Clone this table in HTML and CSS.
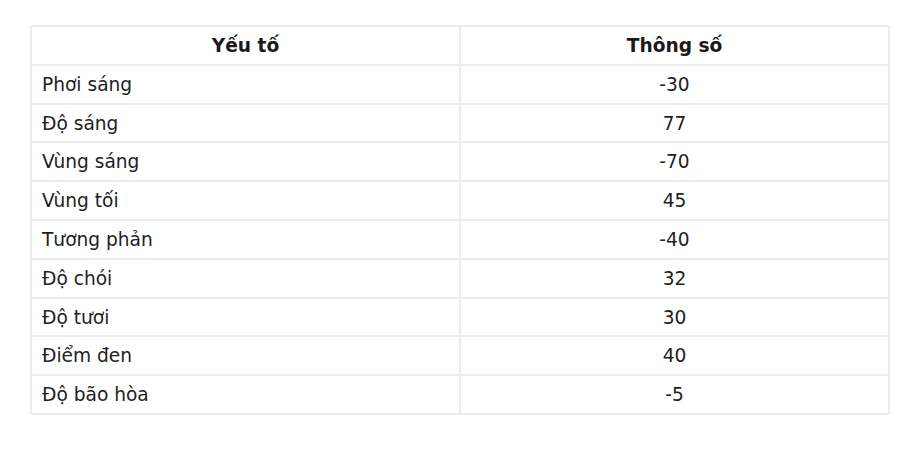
FILE: index.html
```html
<!DOCTYPE html>
<html lang="vi">
<head>
<meta charset="utf-8">
<link rel="stylesheet" href="styles.css">
</head>
<body>
<table class="params">
  <thead>
    <tr><th>Yếu tố</th><th>Thông số</th></tr>
  </thead>
  <tbody>
    <tr><td>Phơi sáng</td><td class="val">-30</td></tr>
    <tr><td>Độ sáng</td><td class="val">77</td></tr>
    <tr><td>Vùng sáng</td><td class="val">-70</td></tr>
    <tr><td>Vùng tối</td><td class="val">45</td></tr>
    <tr><td>Tương phản</td><td class="val">-40</td></tr>
    <tr><td>Độ chói</td><td class="val">32</td></tr>
    <tr><td>Độ tươi</td><td class="val">30</td></tr>
    <tr><td>Điểm đen</td><td class="val">40</td></tr>
    <tr><td>Độ bão hòa</td><td class="val">-5</td></tr>
  </tbody>
</table>
</body>
</html>
```
FILE: styles.css
```css
html, body {
  margin: 0;
  background: #ffffff;
}
body {
  padding: 25px 30px;
  font-family: "DejaVu Sans", Verdana, sans-serif;
  font-size: 18.6px;
  color: #1e1e1e;
}
.params {
  width: 860px;
  border-collapse: collapse;
  table-layout: fixed;
}
.params th,
.params td {
  width: 50%;
  border: 2px solid #ececec;
  padding: 8px 10px 6px;
  line-height: 22.8px;
  text-align: left;
  font-weight: normal;
}
.params th {
  text-align: center;
  font-weight: bold;
  color: #1a1a1a;
}
.params td.val {
  text-align: center;
}
```
